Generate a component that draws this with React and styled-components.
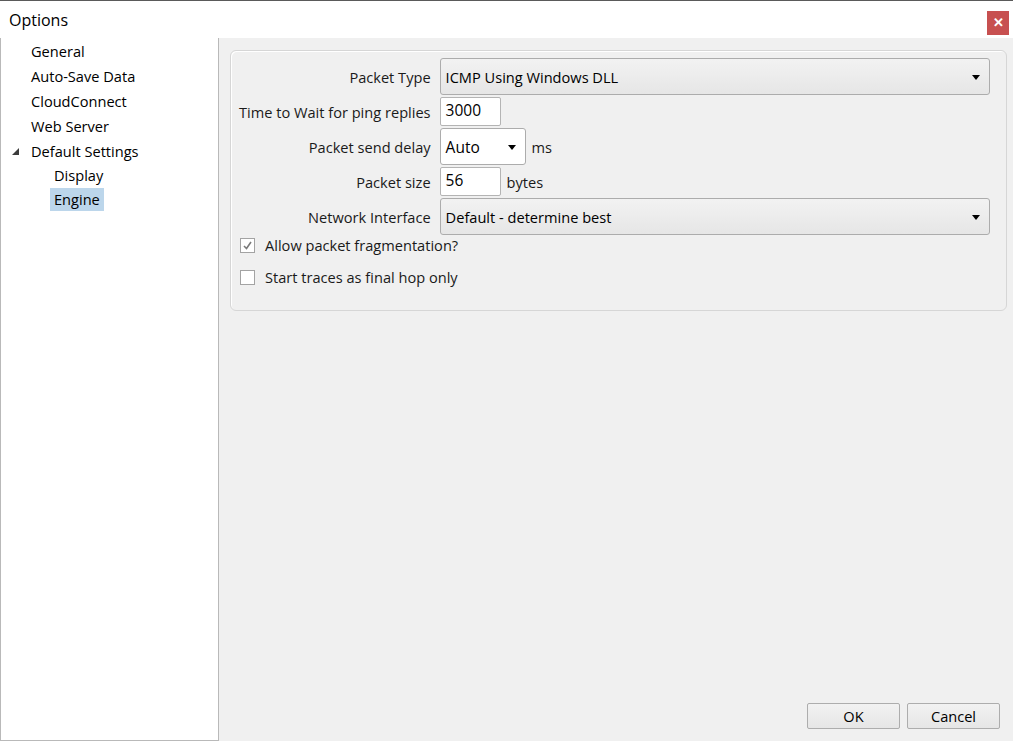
import styled, { createGlobalStyle } from 'styled-components';

const GlobalStyle = createGlobalStyle`
	html, body {
		margin: 0;
		padding: 0;
		background: #f0f0f0;
	}
	body {
		font-family: 'Open Sans', 'Noto Sans', sans-serif;
		font-size: 14.6px;
		color: #000;
	}
	* {
		box-sizing: border-box;
	}
`;

const Window = styled.div`
	width: 1013px;
	height: 741px;
	display: flex;
	flex-direction: column;
	border-top: 1px solid #5a5a5a;
	background: #f0f0f0;
	overflow: hidden;
`;

const TitleBar = styled.div`
	height: 37px;
	flex: none;
	display: flex;
	align-items: center;
	justify-content: space-between;
	padding: 0 4px 0 9px;
	background: #fff;
`;

const Title = styled.span`
	font-size: 16px;
	color: #000;
`;

const CloseButton = styled.button`
	width: 22px;
	height: 24px;
	margin-top: 6px;
	border: none;
	background: #c75050;
	color: #fff;
	font-size: 13px;
	font-weight: bold;
	display: flex;
	align-items: center;
	justify-content: center;
	padding: 0;
`;

const Body = styled.div`
	flex: 1;
	display: flex;
	min-height: 0;
`;

const Tree = styled.ul`
	width: 219px;
	flex: none;
	margin: 0;
	padding: 1px 0 0;
	list-style: none;
	background: #fff;
	border: 1px solid #b9b9b9;
	border-top: none;
`;

const TreeItem = styled.li`
	height: ${({ $child }) => ($child ? 23 : 25)}px;
	margin-bottom: ${({ $child }) => ($child ? 1 : 0)}px;
	display: flex;
	align-items: center;
	padding-left: ${({ $child }) => ($child ? 49 : 11)}px;
`;

const Expander = styled.span`
	width: 15px;
	display: flex;
	align-items: center;
	flex: none;
`;

const TreeLabel = styled.span`
	padding: 0 4px;
	line-height: 23px;
	background: ${({ $selected }) => ($selected ? '#bcd6eb' : 'transparent')};
`;

const Content = styled.div`
	flex: 1;
	display: flex;
	flex-direction: column;
	justify-content: space-between;
	padding: 12px 6px 12px 11px;
`;

const GroupBox = styled.div`
	border: 1px solid #d6d6d6;
	border-radius: 6px;
	box-shadow: inset 1px 1px 0 #fff;
	padding: 7px 16px 11px 8px;
	display: grid;
	grid-template-columns: auto 1fr;
	column-gap: 9px;
	row-gap: 2px;
	align-items: center;
`;

const Label = styled.span`
	text-align: right;
	color: #1a1a1a;
	white-space: nowrap;
`;

const Field = styled.div`
	display: flex;
	align-items: center;
	gap: 6px;
`;

const Combo = styled.div`
	height: 37px;
	width: ${({ $width }) => ($width ? `${$width}px` : '100%')};
	display: flex;
	align-items: center;
	justify-content: space-between;
	padding: 0 9px 0 5px;
	border: 1px solid #acacac;
	border-radius: 3px;
	background: ${({ $white }) =>
		$white ? '#fff' : 'linear-gradient(#f2f2f2, #e6e6e6)'};
	font-size: ${({ $white }) => ($white ? 15.5 : 14.6)}px;
`;

const Arrow = styled.span`
	width: 0;
	height: 0;
	border-left: 4px solid transparent;
	border-right: 4px solid transparent;
	border-top: 5px solid #000;
	margin-top: 2px;
`;

const TextBox = styled.div`
	width: 61px;
	height: 29px;
	padding: 0 5px;
	background: #fff;
	border: 1px solid #b4b4b4;
	border-radius: 2px;
	font-size: 15.5px;
	display: flex;
	align-items: flex-start;
	line-height: 24px;
`;

const Unit = styled.span`
	color: #1a1a1a;
`;

const CheckRow = styled.label`
	grid-column: 1 / -1;
	display: flex;
	align-items: center;
	gap: 10px;
	padding-left: 1px;
	height: ${({ $tall }) => ($tall ? 44 : 16)}px;
	color: #1a1a1a;
`;

const Box = styled.span`
	width: 15px;
	height: 15px;
	border: 1px solid #a3a3a3;
	background: #fff;
	display: flex;
	align-items: center;
	justify-content: center;
	flex: none;
`;

const ButtonRow = styled.div`
	display: flex;
	justify-content: flex-end;
	gap: 7px;
	padding-right: 7px;
`;

const Button = styled.button`
	width: 93px;
	height: 26px;
	font-family: inherit;
	font-size: 14.6px;
	color: #000;
	border: 1px solid #adadad;
	border-radius: 2px;
	background: linear-gradient(#f2f2f2, #e6e6e6);
	padding: 0;
`;

const treeItems = [
	{ label: 'General' },
	{ label: 'Auto-Save Data' },
	{ label: 'CloudConnect' },
	{ label: 'Web Server' },
	{ label: 'Default Settings', expanded: true },
	{ label: 'Display', child: true },
	{ label: 'Engine', child: true, selected: true },
];

const Check = () => (
	<svg width="11" height="11" viewBox="0 0 11 11">
		<path d="M2 6 L4.5 8.5 L9 2" fill="none" stroke="#7a7a7a" strokeWidth="1.6" />
	</svg>
);

const App = () => (
	<>
		<GlobalStyle />
		<Window>
			<TitleBar>
				<Title>Options</Title>
				<CloseButton>✕</CloseButton>
			</TitleBar>
			<Body>
				<Tree>
					{treeItems.map((item) => (
						<TreeItem key={item.label} $child={item.child}>
							{!item.child && (
								<Expander>
									{item.expanded && (
										<svg width="8" height="8" viewBox="0 0 8 8">
											<polygon points="7,0 7,7 0,7" fill="#3c3c3c" />
										</svg>
									)}
								</Expander>
							)}
							<TreeLabel $selected={item.selected}>{item.label}</TreeLabel>
						</TreeItem>
					))}
				</Tree>
				<Content>
					<GroupBox>
						<Label>Packet Type</Label>
						<Combo>
							ICMP Using Windows DLL
							<Arrow />
						</Combo>

						<Label>Time to Wait for ping replies</Label>
						<Field>
							<TextBox>3000</TextBox>
						</Field>

						<Label>Packet send delay</Label>
						<Field>
							<Combo $white $width={86}>
								Auto
								<Arrow />
							</Combo>
							<Unit>ms</Unit>
						</Field>

						<Label>Packet size</Label>
						<Field>
							<TextBox>56</TextBox>
							<Unit>bytes</Unit>
						</Field>

						<Label>Network Interface</Label>
						<Combo>
							Default - determine best
							<Arrow />
						</Combo>

						<CheckRow>
							<Box>
								<Check />
							</Box>
							Allow packet fragmentation?
						</CheckRow>
						<CheckRow $tall>
							<Box />
							Start traces as final hop only
						</CheckRow>
					</GroupBox>
					<ButtonRow>
						<Button>OK</Button>
						<Button>Cancel</Button>
					</ButtonRow>
				</Content>
			</Body>
		</Window>
	</>
);

export default App;
